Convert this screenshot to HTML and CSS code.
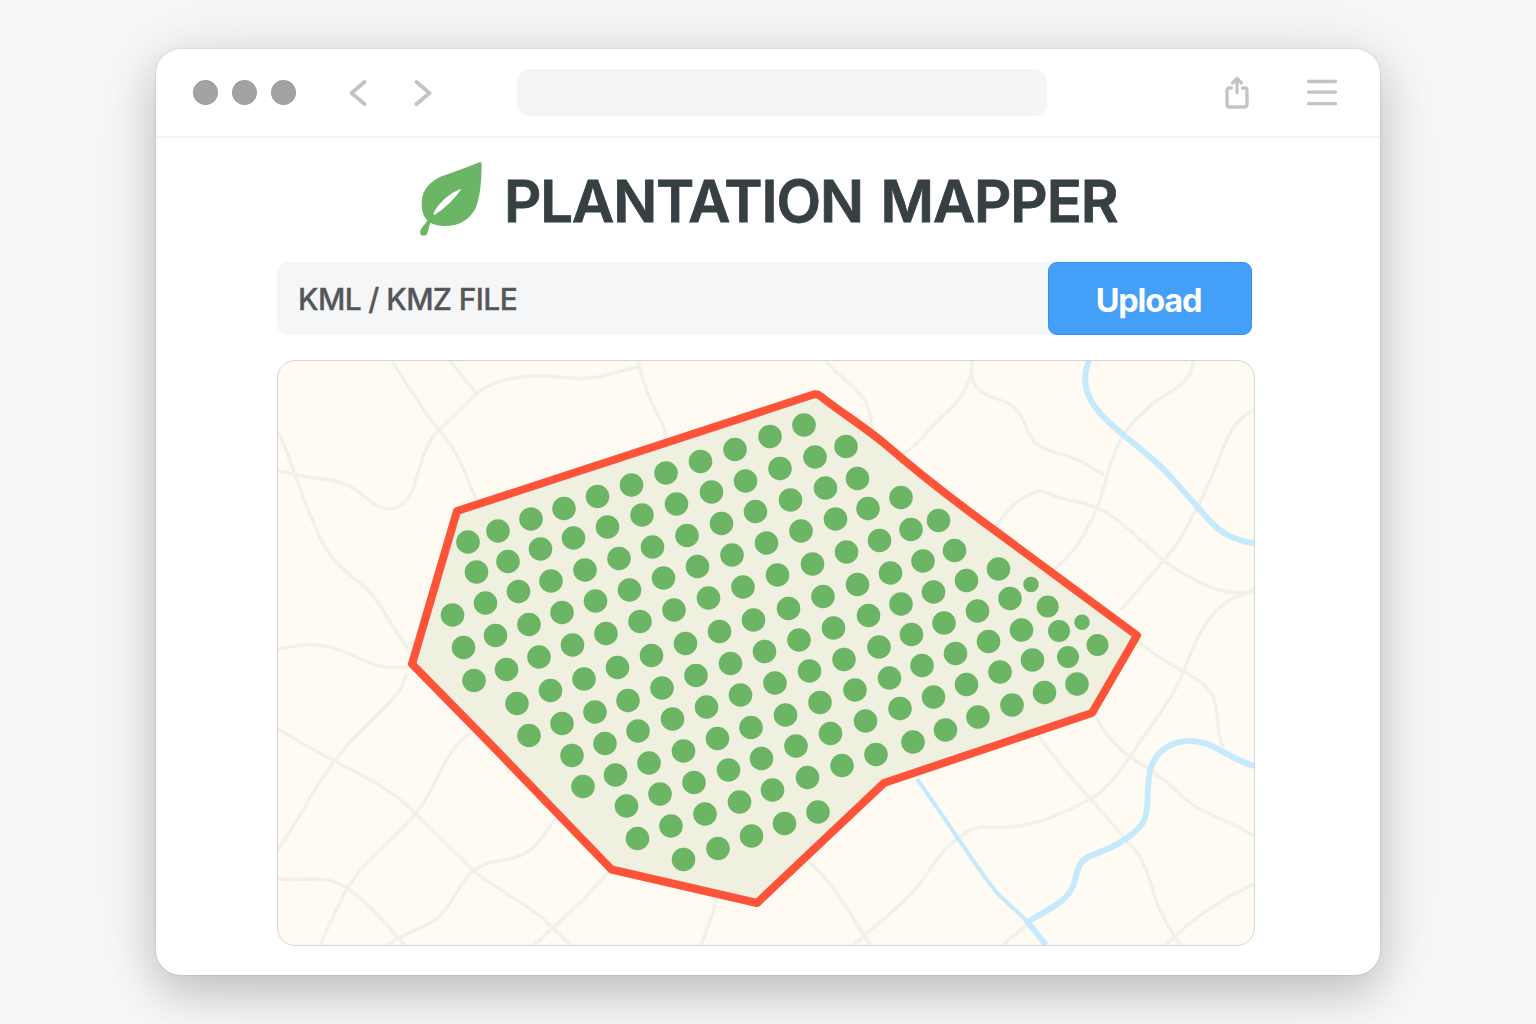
FILE: index.html
```html
<!DOCTYPE html>
<html lang="en">
<head>
<meta charset="utf-8">
<title>Plantation Mapper</title>
<link rel="stylesheet" href="styles.css">
</head>
<body>
<div class="window">
  <header class="toolbar">
    <div class="lights"><span class="light"></span><span class="light"></span><span class="light"></span></div>
    <nav class="history">
      <svg class="chevron" viewBox="0 0 18 26"><path d="M15.5 2 2.5 13 15.5 24"/></svg>
      <svg class="chevron" viewBox="0 0 18 26"><path d="M2.5 2 15.5 13 2.5 24"/></svg>
    </nav>
    <div class="address"></div>
    <div class="tools">
      <svg class="share" viewBox="0 0 24 34"><path d="M6.500 12H4.500Q2 12 2 14.500V28.500Q2 31 4.500 31H19.500Q22 31 22 28.500V14.500Q22 12 19.500 12H17.500"/><path d="M12 16.500V3M7.500 7 12 2.400 16.500 7"/></svg>
      <svg class="menu" viewBox="0 0 32 28"><path d="M2.500 2.500H29.500M2.500 13.200H29.500M2.500 24.700H29.500"/></svg>
    </div>
  </header>
  <main class="content">
    <div class="brand">
      <svg class="leaf" viewBox="419 161 64 76">
        <path class="leaf-body" d="M479.500 162.200Q481.500 161.500 481.600 164C481.800 180 480 198 475.500 208.500C469 220 460 226 444 226C438 226 434 224.500 430.300 223C428.500 227 428.500 231 427 234C425 237 419.500 236 420 231.500C421 228 424.500 225 427.500 220.500C422.500 215.500 421.500 209 421.700 202C422 189 431 181.500 441 176.500C453 172 467 167.500 479.500 162.200Z"/>
        <path class="leaf-vein" d="M461.300 189C451 191.500 437 204.500 433.500 213.500Q433.500 215.500 435.500 214.500C444 208.500 454.500 199.500 461.300 189Z"/>
      </svg>
      <h1 class="title">PLANTATION MAPPER</h1>
    </div>
    <div class="upload">
      <div class="file">KML / KMZ FILE</div>
      <button class="button" type="button">Upload</button>
    </div>
    <div class="map">
      <svg class="canvas" viewBox="278 361 976 584">
        <g class="roads">
          <path d="M392 361C404 381 419 402 431 420C437 427 440 431 444 436C458 453 467 476 476 500"/>
          <path d="M450 361 477 394"/>
          <path d="M278 471C290 472 300 477 315 478C335 479 350 484 364 496C373 503 378 509 390 509C402 508 410 498 414 486C420 466 426 443 438 431L475 395C490 382 513 376 540 376C558 376 575 381 599 377L641 366"/>
          <path d="M638 361C642 380 650 400 659 417Q665 427 666 440"/>
          <path d="M278 432C294 465 300 495 318 533C330 563 351 575 368 590C383 606 393 629 409 650"/>
          <path d="M278 649C300 645 320 641 345 652C372 665 385 670 410 667"/>
          <path d="M278 729C315 752 340 763 370 780C393 792 407 804 420 818L473 870C498 892 525 900 553 928L570 945"/>
          <path d="M407 673C402 690 395 697 385 707L350 742C333 762 316 785 305 807Q290 831 278 850"/>
          <path d="M475 731C446 744 440 781 420 808C404 831 375 851 357 874C342 894 332 920 320 945"/>
          <path d="M278 879C300 881 320 876 335 882C350 888 360 897 374 911L405 945"/>
          <path d="M388 945C405 932 416 931 430 923C450 912 454 890 472 872C485 861 502 861 514 858C534 853 542 837 554 821"/>
          <path d="M534 945 553 928 585 898 610 870"/>
          <path d="M718 895Q711 920 701 945"/>
          <path d="M808 861C837 887 848 911 870 945"/>
          <path d="M854 945C880 920 911 901 930 869C943 849 953 841 967 832C980 824 993 828 1008 827C1042 825 1065 812 1092 798C1112 786 1125 763 1138 745C1156 717 1176 695 1184 669C1196 642 1206 606 1244 594L1254 589"/>
          <path d="M826 361C845 384 867 391 870 416Q872 424 871 433"/>
          <path d="M900 455C917 449 926 430 944 415C959 402 973 385 972 361"/>
          <path d="M971 370C971 390 987 396 1003 401C1028 410 1024 437 1038 445C1052 455 1074 454 1089 466L1104 475"/>
          <path d="M994 529C1008 508 1021 495 1040 491C1052 493 1060 500 1074 501C1106 506 1125 526 1147 546L1164 561C1189 577 1215 597 1254 592"/>
          <path d="M1193 361C1191 391 1160 392 1143 413C1124 428 1115 449 1108 472C1101 501 1085 549 1050 572"/>
          <path d="M1254 410C1237 418 1230 431 1223 449C1212 475 1206 493 1194 513C1182 538 1173 550 1160 565Q1137 591 1121 610"/>
          <path d="M1129 634C1157 658 1171 664 1190 675C1228 694 1212 724 1223 748"/>
          <path d="M1038 735Q1060 766 1088 796L1127 841C1153 867 1148 887 1161 912Q1170 931 1181 945"/>
          <path d="M1096 718C1109 739 1122 754 1143 765C1157 773 1163 780 1176 790C1198 815 1228 818 1254 836"/>
          <path d="M1003 945C1017 932 1025 928 1033 919"/>
          <path d="M1166 945C1196 914 1225 898 1254 884"/>
        </g>
        <g class="rivers">
          <path d="M1089 360C1080 383 1089 401 1100 413C1120 436 1145 449 1166 472C1180 486 1195 505 1210 521Q1227 540 1254 543"/>
          <path class="river-thin" d="M917 779C944 816 977 869 998 894L1028 922"/>
          <path d="M1026 920 1046 945"/>
          <path d="M1028 922C1043 911 1066 904 1073 886C1078 872 1077 863 1088 857C1106 850 1129 841 1142 824C1151 811 1145 787 1151 767C1158 748 1174 741 1190 741C1214 741 1226 758 1254 766"/>
        </g>
        <path class="boundary" d="M457 511 812 395Q817 393 821 396.500C836 409 862 425 885 444C915 470 948 496 982 521L1137 635.500 1092 713 884 783 757 903 611.500 869.500Q560 816 490 743.500L412 664Z"/>
        <path class="trees" d="M468 542h0M498 531h0M531 519h0M564 508.500h0M597.500 496.500h0M631.500 485h0M666 473h0M700.500 461.500h0M735 449.500h0M770 436.500h0M804 425h0
          M476.500 572h0M508 561.500h0M540.500 549h0M573.500 538h0M607.500 527h0M642 515h0M676.500 504h0M711.500 492h0M745.500 481h0M780 468.500h0M815 457h0M846 446.500h0
          M452.500 615h0M485.500 603h0M518.500 591.500h0M551 581h0M585 570h0M619 558.500h0M652.500 547h0M687 535.500h0M721.500 523.500h0M755.500 511.500h0M790.500 500h0M825.500 488h0M857.500 478.500h0
          M463.500 647.500h0M495.500 635.500h0M529 624.500h0M562 612.500h0M595.500 601h0M629.500 590h0M663.500 578h0M697.500 566.500h0M732 555h0M766.500 543h0M801 531h0M835.500 519h0M868 508.500h0M901 497.500h0
          M474 680.500h0M506.500 669.500h0M539 657h0M572.500 645h0M606 633.500h0M640 621.500h0M674 610h0M708.500 598h0M743 587h0M777.500 575h0M812.500 564h0M846.500 552h0M879.500 540.500h0M911 529.500h0M938.500 520.500h0
          M517 703.500h0M550.500 690.500h0M584 679h0M617.500 667.500h0M651.500 655.500h0M685.500 643.500h0M719.500 631.500h0M753.500 620h0M788.500 608.500h0M823 596.500h0M857.500 584.500h0M890.500 573h0M923 561h0M954.500 550.500h0
          M529 735.500h0M562 723.500h0M595 712h0M628 700.500h0M662 688h0M696 675.500h0M730.500 663.500h0M764.500 651.500h0M799 640h0M833.500 628h0M868.500 615.500h0M901 604h0M933.500 592h0M966.500 580.500h0M998.500 569h0
          M572 755.500h0M605 743.500h0M638 731h0M672.500 719h0M706.500 707h0M740.500 695h0M775 683h0M809.500 671h0M844 659.500h0M879 647h0M911.500 634.500h0M944 623h0M977.500 611h0M1010 598.500h0
          M583 786.500h0M615.500 775h0M649 763h0M683.500 751h0M717.500 738.500h0M751 727.500h0M785.500 715h0M820 702.500h0M855 690h0M889.500 678h0M922 665.500h0M955.500 653.500h0M988.500 641.500h0M1021.500 630h0
          M626.500 806h0M660 794h0M694 782.500h0M728.500 770h0M761.500 758.500h0M796 746h0M830.500 733.500h0M865.500 721h0M900 708.500h0M933.500 697h0M966.500 684.500h0M1000 672h0M1032.500 660h0
          M637.500 838.500h0M671 826h0M705 814h0M739.500 802h0M772.500 790h0M807.500 777.500h0M842 765.500h0M876 754.500h0M913 742h0M945.500 730h0M978 717h0M1012 705h0M1044.500 692.500h0M1077 684h0
          M683.500 859.500h0M718 848.500h0M751.500 836h0M784.500 823.500h0M818 812h0"/>
        <path class="trees edge" d="M1047.700 606.500h0M1059 631h0M1068 657h0M1097.500 645h0"/>
        <path class="trees sapling" d="M1031 584.500h0M1082 622.300h0"/>
      </svg>
    </div>
  </main>
</div>
</body>
</html>
```
FILE: styles.css
```css
* { box-sizing: border-box; }

body {
  margin: 0;
  height: 1024px;
  padding: 49px 156px;
  overflow: hidden;
  background: #f6f8f5;
  font-family: Inter, "Liberation Sans", sans-serif;
}

.window {
  height: 926px;
  border-radius: 25px;
  background: #fff;
  box-shadow: 0 0 1px 1px rgba(0, 0, 0, 0.06), 0 18px 44px rgba(0, 0, 0, 0.18), 0 6px 80px rgba(0, 0, 0, 0.09);
}

.toolbar {
  display: flex;
  align-items: center;
  height: 89px;
  padding: 0 43px 0 37px;
  border-bottom: 2px solid #f3f3f3;
}

.lights { display: flex; gap: 14.5px; }

.light {
  width: 24.5px;
  height: 24.5px;
  border: 1px solid #979797;
  border-radius: 50%;
  background: #a3a3a3;
}

.history { display: flex; gap: 47px; margin-left: 53px; }

.chevron {
  width: 18px;
  height: 26px;
  fill: none;
  stroke: #c3c3c3;
  stroke-width: 3.8;
  stroke-linecap: round;
  stroke-linejoin: round;
}

.address {
  width: 530px;
  height: 47px;
  margin-left: 85px;
  border-radius: 13px;
  background: #f5f5f5;
}

.tools { display: flex; align-items: center; gap: 57px; margin-left: auto; margin-right: -1px; }

.share, .menu {
  fill: none;
  stroke: #c4c4c4;
  stroke-width: 3.3;
  stroke-linecap: round;
  stroke-linejoin: round;
}

.share { width: 24px; height: 34px; }
.menu { width: 32px; height: 28px; }

.content { padding: 23px 125px 0 121px; }

.brand { display: flex; padding-left: 142px; height: 76px; }

.leaf { flex: none; width: 64px; height: 76px; }
.leaf-body { fill: #6bb665; }
.leaf-vein { fill: #fff; }

.title {
  margin: 3px 0 0 21px;
  color: #364042;
  font-size: 58px;
  font-weight: 600;
  letter-spacing: -1.08px;
  word-spacing: 4px;
  line-height: 74px;
  white-space: nowrap;
  -webkit-text-stroke: 0.8px #364042;
}

.upload {
  display: flex;
  width: 975px;
  height: 73px;
  margin-top: 25px;
  border-radius: 11px;
  background: #f5f6f8;
}

.file {
  flex: 1;
  padding-left: 21px;
  color: #555658;
  font-size: 30px;
  font-weight: 500;
  letter-spacing: -0.65px;
  line-height: 74px;
  -webkit-text-stroke: 0.3px #555658;
}

.button {
  width: 204px;
  padding: 3px 3px 0 0;
  border: 1px solid #3491ee;
  border-radius: 9px;
  background: #449ff8;
  color: #fff;
  font: 700 32.5px Inter, "Liberation Sans", sans-serif;
  letter-spacing: -1.2px;
}

.map {
  height: 586px;
  margin-top: 25px;
  overflow: hidden;
  border: 1px solid #d3d6d6;
  border-radius: 18px;
  background: #fffbf3;
}

.canvas { display: block; width: 976px; height: 584px; }

.roads { fill: none; stroke: #f1f0e9; stroke-width: 3.4; }

.rivers { fill: none; stroke: #c6eafd; stroke-width: 6; }
.river-thin { stroke-width: 4; }

.boundary { fill: #eff0e0; stroke: #fd5338; stroke-width: 8; stroke-linejoin: round; }

.trees { fill: none; stroke: #6bb565; stroke-width: 23.6; stroke-linecap: round; }
.edge { stroke-width: 22; }
.sapling { stroke-width: 15.5; }
```
